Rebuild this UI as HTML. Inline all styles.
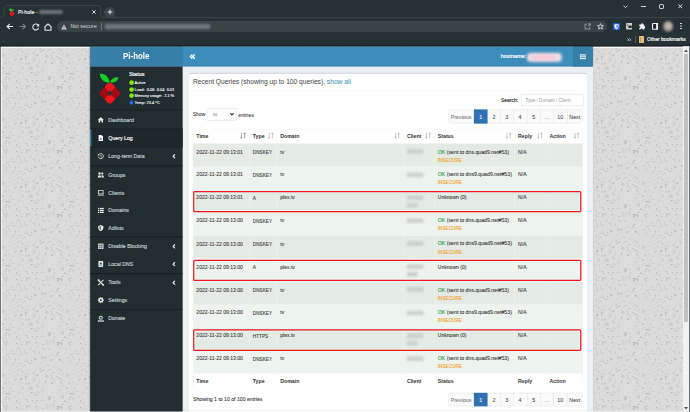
<!DOCTYPE html><html><head><meta charset="utf-8"><style>
html,body{margin:0;padding:0}
body{width:690px;height:412px;overflow:hidden;position:relative;background:#263136;font-family:"Liberation Sans",sans-serif}
.a{position:absolute}
.t{position:absolute;white-space:nowrap;line-height:1}
#page{position:absolute;left:0;top:46px;width:690px;height:366px;overflow:hidden;background:#dcdcdc}
#s{position:absolute;left:0;top:0;width:1715px;height:910px;transform:translateY(0.5px) scale(0.40233);transform-origin:0 0}
#w{position:absolute;left:223.7px;top:0;width:1250px;height:1000px;background:#ecf0f5;box-shadow:0 0 5px rgba(0,0,0,.5)}
</style></head><body>
<div class="a" style="left:0;top:0;width:690px;height:46px;background:#263136"></div>
<svg class="a" style="left:0;top:0" width="690" height="20" viewBox="0 0 690 20"><path d="M0 17.6H1.2Q4.2 17.6 4.2 14.6V8.6Q4.2 5.6 7.2 5.6H97.4Q100.4 5.6 100.4 8.6V14.6Q100.4 17.6 103.4 17.6H690" stroke="#3e494e" stroke-width="0.9" fill="none"/></svg>
<svg class="a" style="left:8px;top:8px" width="8" height="9" viewBox="0 0 8 9"><circle cx="2.5" cy="1.8" r="1.3" fill="#22d42a"/><path d="M2.6 2.6Q4 3.4 5.6 1.4" stroke="#22d42a" stroke-width="1.2" fill="none"/><circle cx="3.9" cy="5.6" r="2.3" fill="#f01820"/><circle cx="3.9" cy="5.6" r="0.7" fill="#6b1a1e"/></svg>
<div class="t" style="left:17.9px;top:9.5px;font-size:5.3px;color:#f1f3f4;font-weight:400;-webkit-text-stroke:0.15px #f1f3f4">Pi-hole -</div>
<div class="a" style="left:38.5px;top:9.8px;width:24px;height:4.6px;background:#6a7479;filter:blur(1.3px);border-radius:2px"></div>
<svg class="a" style="left:92px;top:9.5px" width="4" height="4" viewBox="0 0 4 4"><path d="M0.3 0.3L3.7 3.7M3.7 0.3L0.3 3.7" stroke="#e8eaed" stroke-width="0.9"/></svg>
<div class="a" style="left:104px;top:6.5px;width:11px;height:11px;border-radius:50%;background:#3a454a"></div>
<svg class="a" style="left:106.5px;top:9px" width="6" height="6" viewBox="0 0 6 6"><path d="M3 0.6V5.4M0.6 3H5.4" stroke="#e8eaed" stroke-width="1"/></svg>
<svg class="a" style="left:622.5px;top:4.6px" width="5" height="3.4" viewBox="0 0 5 3.4"><path d="M0.5 0.6L2.5 2.7L4.5 0.6" stroke="#d5d8db" stroke-width="0.95" fill="none"/></svg>
<div class="a" style="left:641.2px;top:6.2px;width:4.4px;height:0.9px;background:#d5d8db"></div>
<div class="a" style="left:659.2px;top:4.3px;width:3px;height:3px;border:0.9px solid #d5d8db;border-radius:1.2px"></div>
<svg class="a" style="left:678px;top:4.1px" width="4.6" height="4.6" viewBox="0 0 4.6 4.6"><path d="M0.4 0.4L4.2 4.2M4.2 0.4L0.4 4.2" stroke="#e8eaed" stroke-width="0.95"/></svg>
<svg class="a" style="left:5.5px;top:22.8px" width="7.5" height="7" viewBox="0 0 7.5 7"><path d="M7 3.5H1.2M3.8 0.8L1.1 3.5L3.8 6.2" stroke="#e8eaed" stroke-width="1.1" fill="none"/></svg>
<svg class="a" style="left:18.5px;top:22.8px" width="7.5" height="7" viewBox="0 0 7.5 7"><path d="M0.5 3.5H6.3M3.7 0.8L6.4 3.5L3.7 6.2" stroke="#7d878b" stroke-width="1.1" fill="none"/></svg>
<svg class="a" style="left:31.5px;top:22.8px" width="8" height="8" viewBox="0 0 8 8"><path d="M6.4 2.6A3 3 0 1 0 6.6 5" stroke="#e8eaed" stroke-width="1.1" fill="none"/><path d="M7.2 0.8V3.6H4.4Z" fill="#e8eaed"/></svg>
<svg class="a" style="left:44px;top:22.6px" width="8" height="8" viewBox="0 0 8 8"><path d="M1 3.6L4 1L7 3.6V7.2H1Z" stroke="#e8eaed" stroke-width="1.1" fill="none" stroke-linejoin="round"/></svg>
<div class="a" style="left:57px;top:20.8px;width:550px;height:11.4px;border-radius:6px;background:#394449"></div>
<svg class="a" style="left:61px;top:23.5px" width="6" height="6" viewBox="0 0 6 6"><path d="M3 0.3L5.8 5.6H0.2Z" fill="#c9ccd0"/><path d="M3 2.1V3.9M3 4.4V4.9" stroke="#394449" stroke-width="0.6"/></svg>
<div class="t" style="left:70.4px;top:24.1px;font-size:5.45px;color:#d5d8da;font-weight:400;">Not secure</div>
<div class="a" style="left:100.6px;top:23px;width:0.6px;height:7px;background:#6f777b"></div>
<div class="a" style="left:105px;top:24.3px;width:105px;height:4.4px;background:#6d777b;filter:blur(1.2px)"></div>
<svg class="a" style="left:584px;top:23px" width="7" height="7" viewBox="0 0 7 7"><path d="M3 1.2H1V6H5.8V4M3.6 3.4L6.2 0.8M4 0.8H6.2V3" stroke="#a6acaf" stroke-width="0.8" fill="none"/></svg>
<svg class="a" style="left:597px;top:22.6px" width="7" height="7" viewBox="0 0 7 7"><path d="M3.5 0.6L4.3 2.6L6.4 2.7L4.8 4L5.3 6.1L3.5 5L1.7 6.1L2.2 4L0.6 2.7L2.7 2.6Z" stroke="#dfe1e3" stroke-width="0.85" fill="none" stroke-linejoin="round"/></svg>
<svg class="a" style="left:613px;top:22.8px" width="7" height="7.6" viewBox="0 0 7 7.6"><rect width="7" height="7.6" rx="1.2" fill="#1f5fd0"/><path d="M1.4 1.2H5.6V3.6Q5.6 5.6 3.5 6.6Q1.4 5.6 1.4 3.6Z" fill="#fff"/><path d="M3.5 1.9V5.6Q4.6 5 4.7 3.6V1.9Z" fill="#1f5fd0"/></svg>
<svg class="a" style="left:625.8px;top:23.4px" width="6.6" height="6.4" viewBox="0 0 6.6 6.4"><rect width="6.6" height="6.4" rx="1" fill="#cfd0d0"/><rect x="2.4" y="2.6" width="3.4" height="2.4" fill="#2b2f31"/><rect x="0.8" y="1.6" width="1.4" height="1" fill="#2b2f31"/></svg>
<svg class="a" style="left:638.8px;top:23.2px" width="6.6" height="6.8" viewBox="0 0 6.6 6.8"><path d="M0.3 1.6H2.2Q2 0.2 3.2 0.2Q4.4 0.2 4.2 1.6H5.2V3.2Q6.5 3 6.5 4.2Q6.5 5.4 5.2 5.2V6.6H3.5Q3.7 5.4 2.6 5.4Q1.5 5.4 1.7 6.6H0.3V4.8Q1.4 5 1.4 4Q1.4 3 0.3 3.2Z" fill="#f1f3f4"/></svg>
<svg class="a" style="left:651.6px;top:23.3px" width="6.8" height="6.8" viewBox="0 0 6.8 6.8"><rect x="0.55" y="0.55" width="5.7" height="5.7" rx="0.6" stroke="#f1f3f4" stroke-width="1.1" fill="#1e2427"/><rect x="4.1" y="0.6" width="2.1" height="5.6" fill="#f1f3f4"/></svg>
<div class="a" style="left:662.5px;top:21.3px;width:10.5px;height:10.5px;border-radius:50%;background:radial-gradient(circle at 55% 45%,#d9d0c4 0,#a29a91 45%,#5f6264 100%);filter:blur(0.9px)"></div>
<div class="a" style="left:679.8px;top:22.5px;width:1.8px;height:1.8px;border-radius:50%;background:#e8eaed;box-shadow:0 2.5px 0 #e8eaed,0 5px 0 #e8eaed"></div>
<svg class="a" style="left:626.8px;top:37.6px" width="4.4" height="3.6" viewBox="0 0 4.4 3.6"><path d="M0.4 0.4L1.8 1.8L0.4 3.2M2.4 0.4L3.8 1.8L2.4 3.2" stroke="#e8eaed" stroke-width="0.8" fill="none"/></svg>
<div class="a" style="left:634.8px;top:35.8px;width:0.6px;height:7.2px;background:#4f5a5f"></div>
<svg class="a" style="left:638.8px;top:36px" width="5.6" height="7" viewBox="0 0 5.6 7"><rect width="5.6" height="7" rx="0.6" fill="#e6bd78"/><rect x="1.2" y="0.8" width="0.6" height="5.4" fill="#b58a4a"/></svg>
<div class="t" style="left:647.0px;top:37.1px;font-size:5.05px;color:#f4f5f6;font-weight:400;-webkit-text-stroke:0.18px #f4f5f6">Other bookmarks</div>
<div class="a" style="left:0;top:45px;width:690px;height:1px;background:#1b2226"></div>
<div id="page">
<svg class="a" style="left:0;top:0" width="690" height="366"><defs><pattern id="bg" width="64" height="64" patternUnits="userSpaceOnUse"><rect x="20.7" y="9.7" width="0.8" height="0.8" fill="#7a7a7a" opacity="0.37"/><rect x="52.6" y="6.0" width="1.2" height="1.2" fill="#7a7a7a" opacity="0.34"/><rect x="13.7" y="5.5" width="0.8" height="0.8" fill="#7a7a7a" opacity="0.28"/><rect x="5.8" y="27.2" width="0.8" height="0.8" fill="#7a7a7a" opacity="0.43"/><rect x="60.6" y="40.4" width="0.8" height="0.8" fill="#7a7a7a" opacity="0.34"/><rect x="36.9" y="25.4" width="0.8" height="0.8" fill="#7a7a7a" opacity="0.49"/><rect x="35.6" y="8.5" width="1.2" height="1.2" fill="#7a7a7a" opacity="0.28"/><rect x="7.5" y="19.7" width="0.8" height="0.8" fill="#7a7a7a" opacity="0.43"/><rect x="6.6" y="36.6" width="0.8" height="0.8" fill="#7a7a7a" opacity="0.19"/><rect x="35.1" y="4.0" width="0.8" height="0.8" fill="#7a7a7a" opacity="0.14"/><rect x="31.8" y="34.0" width="1.0" height="1.0" fill="#7a7a7a" opacity="0.42"/><rect x="37.5" y="29.0" width="0.8" height="0.8" fill="#7a7a7a" opacity="0.23"/><rect x="44.7" y="15.6" width="1.2" height="1.2" fill="#7a7a7a" opacity="0.34"/><rect x="31.7" y="22.0" width="1.2" height="1.2" fill="#7a7a7a" opacity="0.29"/><rect x="62.7" y="7.6" width="1.0" height="1.0" fill="#7a7a7a" opacity="0.28"/><rect x="9.7" y="31.3" width="1.2" height="1.2" fill="#7a7a7a" opacity="0.13"/><rect x="5.0" y="35.7" width="1.0" height="1.0" fill="#7a7a7a" opacity="0.42"/><rect x="21.8" y="22.4" width="1.0" height="1.0" fill="#7a7a7a" opacity="0.31"/><rect x="4.4" y="6.0" width="1.2" height="1.2" fill="#7a7a7a" opacity="0.22"/><rect x="42.5" y="3.9" width="1.2" height="1.2" fill="#7a7a7a" opacity="0.39"/><rect x="37.0" y="43.6" width="1.2" height="1.2" fill="#7a7a7a" opacity="0.29"/><rect x="24.7" y="42.8" width="1.0" height="1.0" fill="#7a7a7a" opacity="0.13"/><rect x="22.7" y="39.1" width="0.8" height="0.8" fill="#7a7a7a" opacity="0.31"/><rect x="49.2" y="8.3" width="1.0" height="1.0" fill="#7a7a7a" opacity="0.21"/><rect x="58.7" y="31.8" width="1.0" height="1.0" fill="#7a7a7a" opacity="0.18"/><rect x="35.2" y="56.5" width="1.2" height="1.2" fill="#7a7a7a" opacity="0.43"/><rect x="17.8" y="26.6" width="1.0" height="1.0" fill="#7a7a7a" opacity="0.26"/><rect x="61.3" y="9.7" width="0.8" height="0.8" fill="#7a7a7a" opacity="0.19"/><rect x="42.1" y="0.8" width="0.8" height="0.8" fill="#7a7a7a" opacity="0.44"/><rect x="16.8" y="0.3" width="1.0" height="1.0" fill="#7a7a7a" opacity="0.28"/><rect x="39.0" y="20.4" width="1.2" height="1.2" fill="#7a7a7a" opacity="0.17"/><rect x="60.8" y="41.9" width="1.0" height="1.0" fill="#7a7a7a" opacity="0.40"/><rect x="57.6" y="49.9" width="1.2" height="1.2" fill="#7a7a7a" opacity="0.45"/><rect x="25.1" y="25.5" width="1.2" height="1.2" fill="#7a7a7a" opacity="0.16"/><rect x="25.6" y="12.2" width="1.0" height="1.0" fill="#7a7a7a" opacity="0.49"/><rect x="10.4" y="21.8" width="0.8" height="0.8" fill="#7a7a7a" opacity="0.14"/><rect x="36.3" y="34.3" width="1.2" height="1.2" fill="#7a7a7a" opacity="0.48"/><rect x="1.6" y="56.0" width="0.8" height="0.8" fill="#7a7a7a" opacity="0.35"/><rect x="40.6" y="61.1" width="1.0" height="1.0" fill="#7a7a7a" opacity="0.35"/><rect x="7.9" y="54.3" width="1.0" height="1.0" fill="#7a7a7a" opacity="0.50"/><rect x="30.7" y="20.0" width="1.2" height="1.2" fill="#7a7a7a" opacity="0.17"/><rect x="21.9" y="16.9" width="0.8" height="0.8" fill="#7a7a7a" opacity="0.43"/><rect x="33.0" y="13.1" width="1.0" height="1.0" fill="#7a7a7a" opacity="0.48"/><rect x="9.4" y="34.8" width="1.2" height="1.2" fill="#7a7a7a" opacity="0.13"/><rect x="19.1" y="41.1" width="1.0" height="1.0" fill="#7a7a7a" opacity="0.15"/><rect x="33.2" y="58.1" width="0.8" height="0.8" fill="#7a7a7a" opacity="0.26"/><rect x="34.1" y="49.9" width="0.8" height="0.8" fill="#7a7a7a" opacity="0.25"/><rect x="39.2" y="50.5" width="0.8" height="0.8" fill="#7a7a7a" opacity="0.41"/><rect x="51.6" y="52.4" width="0.8" height="0.8" fill="#7a7a7a" opacity="0.40"/><rect x="12.8" y="31.5" width="0.8" height="0.8" fill="#7a7a7a" opacity="0.40"/><rect x="50.6" y="30.2" width="1.2" height="1.2" fill="#7a7a7a" opacity="0.19"/><rect x="61.2" y="28.6" width="1.0" height="1.0" fill="#7a7a7a" opacity="0.48"/><rect x="61.1" y="23.3" width="0.8" height="0.8" fill="#7a7a7a" opacity="0.20"/><rect x="30.1" y="21.6" width="1.2" height="1.2" fill="#7a7a7a" opacity="0.30"/><rect x="53.8" y="30.7" width="1.2" height="1.2" fill="#7a7a7a" opacity="0.37"/><rect x="5.4" y="42.3" width="1.2" height="1.2" fill="#7a7a7a" opacity="0.47"/><rect x="48.0" y="30.6" width="1.2" height="1.2" fill="#7a7a7a" opacity="0.19"/><rect x="21.3" y="51.3" width="1.0" height="1.0" fill="#7a7a7a" opacity="0.49"/><rect x="29.6" y="47.6" width="0.8" height="0.8" fill="#7a7a7a" opacity="0.15"/><rect x="10.9" y="8.1" width="1.0" height="1.0" fill="#7a7a7a" opacity="0.18"/><rect x="51.6" y="9.4" width="1.0" height="1.0" fill="#7a7a7a" opacity="0.43"/><rect x="42.1" y="22.4" width="0.8" height="0.8" fill="#7a7a7a" opacity="0.33"/><rect x="1.4" y="51.2" width="0.8" height="0.8" fill="#7a7a7a" opacity="0.40"/><rect x="33.7" y="59.8" width="0.8" height="0.8" fill="#7a7a7a" opacity="0.28"/><rect x="52.9" y="13.5" width="1.0" height="1.0" fill="#7a7a7a" opacity="0.22"/><rect x="32.1" y="48.9" width="1.2" height="1.2" fill="#7a7a7a" opacity="0.24"/><rect x="26.8" y="8.4" width="1.0" height="1.0" fill="#7a7a7a" opacity="0.47"/><rect x="57.5" y="42.4" width="1.2" height="1.2" fill="#7a7a7a" opacity="0.43"/><rect x="26.9" y="58.7" width="1.2" height="1.2" fill="#7a7a7a" opacity="0.31"/><rect x="9.7" y="32.7" width="0.8" height="0.8" fill="#7a7a7a" opacity="0.45"/><rect x="38.9" y="49.7" width="0.8" height="0.8" fill="#7a7a7a" opacity="0.18"/><rect x="30.3" y="46.4" width="1.0" height="1.0" fill="#7a7a7a" opacity="0.33"/><rect x="43.7" y="34.0" width="0.8" height="0.8" fill="#7a7a7a" opacity="0.30"/><rect x="56.5" y="3.6" width="0.8" height="0.8" fill="#7a7a7a" opacity="0.19"/><rect x="49.4" y="32.5" width="0.8" height="0.8" fill="#7a7a7a" opacity="0.33"/><rect x="28.4" y="39.2" width="1.2" height="1.2" fill="#7a7a7a" opacity="0.31"/><rect x="12.8" y="17.7" width="1.0" height="1.0" fill="#7a7a7a" opacity="0.31"/><rect x="32.5" y="15.8" width="1.0" height="1.0" fill="#7a7a7a" opacity="0.32"/><rect x="59.1" y="57.1" width="1.0" height="1.0" fill="#7a7a7a" opacity="0.20"/><rect x="8.8" y="7.8" width="0.8" height="0.8" fill="#7a7a7a" opacity="0.29"/><rect x="43.0" y="27.4" width="1.0" height="1.0" fill="#7a7a7a" opacity="0.20"/><rect x="50.2" y="57.4" width="1.2" height="1.2" fill="#7a7a7a" opacity="0.18"/><rect x="41.2" y="23.4" width="0.8" height="0.8" fill="#7a7a7a" opacity="0.22"/><rect x="61.9" y="14.1" width="1.0" height="1.0" fill="#7a7a7a" opacity="0.48"/><rect x="56.6" y="10.4" width="0.8" height="0.8" fill="#7a7a7a" opacity="0.37"/><rect x="10.3" y="27.6" width="1.0" height="1.0" fill="#7a7a7a" opacity="0.32"/><rect x="27.0" y="22.8" width="1.0" height="1.0" fill="#7a7a7a" opacity="0.16"/><rect x="1.2" y="35.5" width="0.8" height="0.8" fill="#7a7a7a" opacity="0.29"/><rect x="24.6" y="33.1" width="0.8" height="0.8" fill="#7a7a7a" opacity="0.23"/><rect x="7.2" y="58.8" width="0.8" height="0.8" fill="#7a7a7a" opacity="0.21"/><rect x="5.4" y="17.4" width="0.8" height="0.8" fill="#7a7a7a" opacity="0.46"/><rect x="17.3" y="8.3" width="1.2" height="1.2" fill="#7a7a7a" opacity="0.28"/><rect x="52.4" y="16.6" width="1.2" height="1.2" fill="#7a7a7a" opacity="0.18"/><rect x="36.5" y="44.8" width="0.8" height="0.8" fill="#7a7a7a" opacity="0.15"/><rect x="51.2" y="11.7" width="1.0" height="1.0" fill="#7a7a7a" opacity="0.46"/><rect x="60.1" y="40.6" width="0.8" height="0.8" fill="#7a7a7a" opacity="0.42"/><rect x="38.9" y="14.2" width="0.8" height="0.8" fill="#7a7a7a" opacity="0.22"/><rect x="29.0" y="21.7" width="1.0" height="1.0" fill="#7a7a7a" opacity="0.33"/><rect x="39.8" y="2.8" width="0.8" height="0.8" fill="#7a7a7a" opacity="0.39"/><rect x="62.0" y="16.8" width="1.0" height="1.0" fill="#7a7a7a" opacity="0.19"/><rect x="40.2" y="34.0" width="1.0" height="1.0" fill="#7a7a7a" opacity="0.20"/><rect x="32.0" y="11.4" width="0.8" height="0.8" fill="#7a7a7a" opacity="0.25"/><rect x="63.6" y="2.4" width="1.2" height="1.2" fill="#7a7a7a" opacity="0.13"/><rect x="35.3" y="12.1" width="1.0" height="1.0" fill="#7a7a7a" opacity="0.30"/><rect x="6.8" y="52.4" width="1.0" height="1.0" fill="#7a7a7a" opacity="0.28"/><rect x="34.9" y="56.9" width="1.0" height="1.0" fill="#7a7a7a" opacity="0.49"/><rect x="44.0" y="62.9" width="1.2" height="1.2" fill="#7a7a7a" opacity="0.25"/><rect x="46.6" y="8.9" width="0.8" height="0.8" fill="#7a7a7a" opacity="0.50"/><rect x="53.6" y="0.9" width="1.0" height="1.0" fill="#7a7a7a" opacity="0.36"/><rect x="27.6" y="3.5" width="1.0" height="1.0" fill="#7a7a7a" opacity="0.37"/><rect x="55.7" y="42.9" width="0.8" height="0.8" fill="#7a7a7a" opacity="0.23"/><rect x="44.3" y="2.9" width="1.0" height="1.0" fill="#7a7a7a" opacity="0.19"/><rect x="28.5" y="16.8" width="1.2" height="1.2" fill="#7a7a7a" opacity="0.49"/><rect x="20.7" y="2.2" width="0.8" height="0.8" fill="#7a7a7a" opacity="0.46"/><rect x="22.8" y="0.1" width="1.0" height="1.0" fill="#7a7a7a" opacity="0.27"/><rect x="17.9" y="42.0" width="0.8" height="0.8" fill="#7a7a7a" opacity="0.21"/><rect x="5.8" y="52.3" width="1.2" height="1.2" fill="#7a7a7a" opacity="0.17"/><rect x="2.7" y="1.4" width="0.8" height="0.8" fill="#7a7a7a" opacity="0.24"/><rect x="5.4" y="61.3" width="0.8" height="0.8" fill="#7a7a7a" opacity="0.44"/><rect x="42.1" y="45.8" width="1.0" height="1.0" fill="#7a7a7a" opacity="0.45"/><rect x="48.9" y="46.1" width="1.0" height="1.0" fill="#7a7a7a" opacity="0.31"/><rect x="46.3" y="41.2" width="1.2" height="1.2" fill="#7a7a7a" opacity="0.14"/><rect x="57.1" y="40.1" width="1.2" height="1.2" fill="#7a7a7a" opacity="0.40"/><rect x="8.9" y="33.5" width="0.8" height="0.8" fill="#7a7a7a" opacity="0.31"/><rect x="52.9" y="37.4" width="1.2" height="1.2" fill="#7a7a7a" opacity="0.46"/><rect x="61.2" y="41.1" width="0.8" height="0.8" fill="#7a7a7a" opacity="0.15"/><rect x="8.5" y="23.1" width="1.0" height="1.0" fill="#7a7a7a" opacity="0.16"/><rect x="35.7" y="40.2" width="1.2" height="1.2" fill="#7a7a7a" opacity="0.36"/><rect x="15.7" y="16.9" width="0.8" height="0.8" fill="#7a7a7a" opacity="0.29"/><rect x="47.9" y="32.2" width="1.2" height="1.2" fill="#7a7a7a" opacity="0.32"/><rect x="33.7" y="47.7" width="0.8" height="0.8" fill="#7a7a7a" opacity="0.30"/><rect x="54.2" y="15.0" width="0.8" height="0.8" fill="#7a7a7a" opacity="0.41"/><rect x="47.3" y="62.4" width="1.0" height="1.0" fill="#7a7a7a" opacity="0.31"/><rect x="4.9" y="58.3" width="0.8" height="0.8" fill="#7a7a7a" opacity="0.23"/><rect x="39.5" y="41.1" width="0.8" height="0.8" fill="#7a7a7a" opacity="0.15"/><rect x="21.2" y="41.7" width="1.2" height="1.2" fill="#7a7a7a" opacity="0.38"/><rect x="36.3" y="0.8" width="1.0" height="1.0" fill="#7a7a7a" opacity="0.14"/><rect x="62.2" y="6.4" width="1.0" height="1.0" fill="#7a7a7a" opacity="0.20"/><rect x="18.6" y="33.1" width="1.0" height="1.0" fill="#7a7a7a" opacity="0.30"/><rect x="49.1" y="63.6" width="1.0" height="1.0" fill="#7a7a7a" opacity="0.33"/><rect x="62.6" y="59.9" width="1.0" height="1.0" fill="#7a7a7a" opacity="0.13"/><rect x="4.9" y="32.4" width="1.0" height="1.0" fill="#7a7a7a" opacity="0.50"/><rect x="24.8" y="58.7" width="0.8" height="0.8" fill="#7a7a7a" opacity="0.47"/><rect x="37.2" y="9.1" width="1.0" height="1.0" fill="#7a7a7a" opacity="0.32"/><rect x="8.5" y="52.5" width="0.8" height="0.8" fill="#7a7a7a" opacity="0.31"/><rect x="45.0" y="14.8" width="1.0" height="1.0" fill="#7a7a7a" opacity="0.46"/><rect x="25.2" y="10.2" width="1.2" height="1.2" fill="#7a7a7a" opacity="0.48"/><rect x="28.8" y="19.3" width="1.0" height="1.0" fill="#7a7a7a" opacity="0.17"/><rect x="24.1" y="7.7" width="1.0" height="1.0" fill="#7a7a7a" opacity="0.25"/><rect x="48.0" y="53.7" width="0.8" height="0.8" fill="#7a7a7a" opacity="0.17"/><rect x="45.6" y="57.7" width="1.0" height="1.0" fill="#7a7a7a" opacity="0.23"/><rect x="4.2" y="25.0" width="0.8" height="0.8" fill="#7a7a7a" opacity="0.45"/><rect x="23.1" y="27.4" width="0.8" height="0.8" fill="#7a7a7a" opacity="0.22"/><rect x="18.0" y="3.3" width="1.2" height="1.2" fill="#7a7a7a" opacity="0.37"/><rect x="59.9" y="16.0" width="1.2" height="1.2" fill="#7a7a7a" opacity="0.22"/><rect x="20.2" y="49.5" width="1.0" height="1.0" fill="#7a7a7a" opacity="0.42"/><rect x="56.6" y="52.0" width="1.2" height="1.2" fill="#7a7a7a" opacity="0.36"/><rect x="35.2" y="46.1" width="1.2" height="1.2" fill="#7a7a7a" opacity="0.14"/><rect x="26.3" y="39.4" width="1.0" height="1.0" fill="#7a7a7a" opacity="0.17"/><rect x="31.1" y="58.4" width="0.8" height="0.8" fill="#7a7a7a" opacity="0.33"/><rect x="30.2" y="22.0" width="1.2" height="1.2" fill="#7a7a7a" opacity="0.23"/><rect x="47.3" y="41.8" width="0.8" height="0.8" fill="#7a7a7a" opacity="0.27"/><rect x="19.3" y="35.7" width="0.8" height="0.8" fill="#7a7a7a" opacity="0.27"/><rect x="41.2" y="4.8" width="1.0" height="1.0" fill="#7a7a7a" opacity="0.31"/><rect x="35.2" y="29.0" width="1.0" height="1.0" fill="#7a7a7a" opacity="0.25"/><rect x="27.4" y="35.1" width="0.8" height="0.8" fill="#7a7a7a" opacity="0.21"/><rect x="21.9" y="5.8" width="1.0" height="1.0" fill="#7a7a7a" opacity="0.21"/><rect x="51.8" y="12.9" width="1.0" height="1.0" fill="#7a7a7a" opacity="0.13"/><rect x="24.5" y="47.7" width="1.0" height="1.0" fill="#7a7a7a" opacity="0.20"/><rect x="21.6" y="4.0" width="1.0" height="1.0" fill="#7a7a7a" opacity="0.23"/><rect x="8.1" y="32.2" width="0.8" height="0.8" fill="#7a7a7a" opacity="0.36"/><rect x="5.9" y="57.4" width="1.2" height="1.2" fill="#7a7a7a" opacity="0.27"/><rect x="28.5" y="61.1" width="0.8" height="0.8" fill="#7a7a7a" opacity="0.44"/><rect x="8.1" y="27.2" width="1.0" height="1.0" fill="#7a7a7a" opacity="0.41"/><rect x="62.0" y="31.3" width="1.2" height="1.2" fill="#7a7a7a" opacity="0.15"/><rect x="54.7" y="62.2" width="0.8" height="0.8" fill="#7a7a7a" opacity="0.21"/><rect x="14.3" y="9.7" width="0.8" height="0.8" fill="#7a7a7a" opacity="0.49"/><rect x="60.3" y="46.2" width="1.0" height="1.0" fill="#7a7a7a" opacity="0.37"/><rect x="5.4" y="49.7" width="0.8" height="0.8" fill="#7a7a7a" opacity="0.12"/><rect x="14.9" y="58.9" width="1.0" height="1.0" fill="#7a7a7a" opacity="0.37"/><rect x="61.6" y="40.1" width="1.0" height="1.0" fill="#7a7a7a" opacity="0.32"/><rect x="44.7" y="7.2" width="1.2" height="1.2" fill="#7a7a7a" opacity="0.15"/><rect x="60.4" y="12.3" width="1.2" height="1.2" fill="#7a7a7a" opacity="0.22"/><rect x="0.1" y="34.4" width="1.0" height="1.0" fill="#7a7a7a" opacity="0.50"/><rect x="61.4" y="41.3" width="1.0" height="1.0" fill="#7a7a7a" opacity="0.46"/><rect x="33.7" y="35.0" width="1.0" height="1.0" fill="#7a7a7a" opacity="0.13"/><rect x="45.1" y="19.7" width="1.0" height="1.0" fill="#7a7a7a" opacity="0.13"/><rect x="56.6" y="41.4" width="0.8" height="0.8" fill="#7a7a7a" opacity="0.15"/><rect x="42.7" y="59.2" width="0.8" height="0.8" fill="#7a7a7a" opacity="0.21"/><rect x="44.5" y="46.0" width="1.0" height="1.0" fill="#7a7a7a" opacity="0.26"/><rect x="12.7" y="51.0" width="1.2" height="1.2" fill="#7a7a7a" opacity="0.40"/><rect x="4.3" y="31.7" width="0.8" height="0.8" fill="#7a7a7a" opacity="0.20"/><rect x="14.8" y="14.2" width="1.0" height="1.0" fill="#7a7a7a" opacity="0.41"/><rect x="7.0" y="39.9" width="0.8" height="0.8" fill="#7a7a7a" opacity="0.35"/><rect x="31.0" y="58.3" width="1.2" height="1.2" fill="#7a7a7a" opacity="0.14"/><rect x="9.4" y="25.2" width="1.2" height="1.2" fill="#7a7a7a" opacity="0.20"/><rect x="9.1" y="3.3" width="1.0" height="1.0" fill="#7a7a7a" opacity="0.14"/><rect x="28.8" y="45.6" width="0.8" height="0.8" fill="#7a7a7a" opacity="0.24"/><rect x="63.8" y="59.6" width="0.8" height="0.8" fill="#7a7a7a" opacity="0.25"/><rect x="41.8" y="33.6" width="1.0" height="1.0" fill="#7a7a7a" opacity="0.30"/><rect x="42.5" y="24.2" width="1.0" height="1.0" fill="#7a7a7a" opacity="0.26"/><rect x="28.3" y="7.0" width="0.8" height="0.8" fill="#7a7a7a" opacity="0.15"/><rect x="22.5" y="61.2" width="0.8" height="0.8" fill="#7a7a7a" opacity="0.17"/><rect x="24.3" y="49.2" width="1.0" height="1.0" fill="#7a7a7a" opacity="0.24"/><rect x="5.6" y="45.1" width="1.2" height="1.2" fill="#7a7a7a" opacity="0.19"/><rect x="58.8" y="12.4" width="1.0" height="1.0" fill="#7a7a7a" opacity="0.26"/><rect x="1.9" y="26.3" width="1.0" height="1.0" fill="#7a7a7a" opacity="0.43"/><rect x="2.6" y="2.2" width="0.8" height="0.8" fill="#7a7a7a" opacity="0.14"/><rect x="16.4" y="47.8" width="1.0" height="1.0" fill="#7a7a7a" opacity="0.46"/><rect x="23.2" y="21.4" width="0.8" height="0.8" fill="#7a7a7a" opacity="0.48"/><rect x="16.8" y="45.9" width="1.0" height="1.0" fill="#7a7a7a" opacity="0.24"/><rect x="19.0" y="46.2" width="1.2" height="1.2" fill="#7a7a7a" opacity="0.35"/><rect x="60.6" y="4.2" width="0.8" height="0.8" fill="#7a7a7a" opacity="0.43"/><rect x="30.4" y="61.2" width="1.0" height="1.0" fill="#7a7a7a" opacity="0.48"/><rect x="50.5" y="58.5" width="0.8" height="0.8" fill="#7a7a7a" opacity="0.43"/><rect x="59.4" y="11.7" width="1.2" height="1.2" fill="#7a7a7a" opacity="0.42"/><rect x="19.4" y="44.3" width="0.8" height="0.8" fill="#7a7a7a" opacity="0.18"/><rect x="21.0" y="20.5" width="1.2" height="1.2" fill="#7a7a7a" opacity="0.26"/><rect x="5.1" y="12.6" width="0.8" height="0.8" fill="#7a7a7a" opacity="0.41"/><rect x="26.1" y="41.6" width="1.2" height="1.2" fill="#7a7a7a" opacity="0.30"/><rect x="20.8" y="62.7" width="0.8" height="0.8" fill="#7a7a7a" opacity="0.46"/><rect x="17.0" y="5.4" width="1.0" height="1.0" fill="#7a7a7a" opacity="0.16"/><rect x="63.3" y="62.2" width="0.8" height="0.8" fill="#7a7a7a" opacity="0.19"/><rect x="26.7" y="39.7" width="1.2" height="1.2" fill="#7a7a7a" opacity="0.38"/><rect x="34.5" y="49.5" width="1.0" height="1.0" fill="#7a7a7a" opacity="0.41"/><rect x="18.8" y="36.3" width="1.2" height="1.2" fill="#7a7a7a" opacity="0.26"/><rect x="16.7" y="28.1" width="0.8" height="0.8" fill="#7a7a7a" opacity="0.19"/><rect x="9.8" y="56.6" width="1.0" height="1.0" fill="#7a7a7a" opacity="0.34"/><rect x="4.1" y="16.1" width="1.2" height="1.2" fill="#7a7a7a" opacity="0.21"/><rect x="14.8" y="51.7" width="0.8" height="0.8" fill="#7a7a7a" opacity="0.37"/><rect x="6.5" y="30.4" width="1.0" height="1.0" fill="#7a7a7a" opacity="0.43"/><rect x="58.5" y="2.6" width="0.8" height="0.8" fill="#7a7a7a" opacity="0.23"/><rect x="3.2" y="38.4" width="0.8" height="0.8" fill="#7a7a7a" opacity="0.43"/><rect x="59.5" y="23.8" width="1.0" height="1.0" fill="#7a7a7a" opacity="0.45"/><rect x="38.6" y="49.6" width="0.8" height="0.8" fill="#7a7a7a" opacity="0.37"/><rect x="6.8" y="38.2" width="0.8" height="0.8" fill="#7a7a7a" opacity="0.36"/><rect x="2.4" y="21.8" width="1.0" height="1.0" fill="#7a7a7a" opacity="0.14"/><rect x="2.4" y="46.9" width="0.8" height="0.8" fill="#7a7a7a" opacity="0.47"/><rect x="52.4" y="26.2" width="1.2" height="1.2" fill="#7a7a7a" opacity="0.26"/><rect x="20.0" y="13.0" width="1.2" height="1.2" fill="#7a7a7a" opacity="0.42"/><rect x="30.9" y="26.1" width="1.2" height="1.2" fill="#7a7a7a" opacity="0.42"/><rect x="35.2" y="40.9" width="0.8" height="0.8" fill="#7a7a7a" opacity="0.15"/><rect x="25.5" y="17.4" width="1.2" height="1.2" fill="#7a7a7a" opacity="0.50"/><rect x="19.7" y="61.0" width="1.2" height="1.2" fill="#7a7a7a" opacity="0.24"/><rect x="56.6" y="26.5" width="1.0" height="1.0" fill="#7a7a7a" opacity="0.13"/><rect x="41.2" y="25.0" width="0.8" height="0.8" fill="#7a7a7a" opacity="0.27"/><rect x="27.8" y="10.0" width="0.8" height="0.8" fill="#7a7a7a" opacity="0.16"/><rect x="26.0" y="56.5" width="0.8" height="0.8" fill="#7a7a7a" opacity="0.30"/><rect x="8.3" y="3.3" width="1.0" height="1.0" fill="#7a7a7a" opacity="0.17"/><rect x="5.7" y="39.8" width="1.2" height="1.2" fill="#7a7a7a" opacity="0.26"/><rect x="11.0" y="22.3" width="0.8" height="0.8" fill="#7a7a7a" opacity="0.18"/><rect x="59.2" y="7.0" width="0.8" height="0.8" fill="#7a7a7a" opacity="0.31"/><rect x="19.3" y="53.6" width="1.0" height="1.0" fill="#7a7a7a" opacity="0.14"/><rect x="20.1" y="38.9" width="0.8" height="0.8" fill="#7a7a7a" opacity="0.36"/><rect x="57.9" y="39.7" width="0.8" height="0.8" fill="#7a7a7a" opacity="0.43"/><rect x="41.0" y="54.8" width="1.2" height="1.2" fill="#7a7a7a" opacity="0.36"/><rect x="54.2" y="53.1" width="0.8" height="0.8" fill="#7a7a7a" opacity="0.19"/><rect x="2.7" y="60.1" width="1.0" height="1.0" fill="#7a7a7a" opacity="0.18"/><rect x="7.9" y="15.8" width="0.8" height="0.8" fill="#7a7a7a" opacity="0.40"/><rect x="2.6" y="36.0" width="0.8" height="0.8" fill="#7a7a7a" opacity="0.41"/><rect x="42.7" y="20.7" width="1.0" height="1.0" fill="#7a7a7a" opacity="0.27"/><rect x="35.2" y="40.1" width="1.0" height="1.0" fill="#7a7a7a" opacity="0.24"/><rect x="19.7" y="16.0" width="1.0" height="1.0" fill="#7a7a7a" opacity="0.27"/><rect x="28.6" y="28.1" width="1.2" height="1.2" fill="#7a7a7a" opacity="0.13"/><rect x="63.1" y="29.8" width="1.2" height="1.2" fill="#7a7a7a" opacity="0.29"/><rect x="49.9" y="29.3" width="1.0" height="1.0" fill="#7a7a7a" opacity="0.19"/><rect x="25.6" y="4.3" width="1.0" height="1.0" fill="#7a7a7a" opacity="0.26"/><rect x="5.9" y="28.3" width="0.8" height="0.8" fill="#7a7a7a" opacity="0.31"/><rect x="2.6" y="8.3" width="1.0" height="1.0" fill="#7a7a7a" opacity="0.47"/><rect x="49.8" y="32.7" width="1.2" height="1.2" fill="#7a7a7a" opacity="0.14"/><rect x="57.3" y="41.8" width="0.8" height="0.8" fill="#7a7a7a" opacity="0.42"/><rect x="54.9" y="63.8" width="0.8" height="0.8" fill="#7a7a7a" opacity="0.40"/><rect x="12.4" y="62.8" width="0.8" height="0.8" fill="#7a7a7a" opacity="0.31"/><rect x="43.9" y="46.1" width="1.0" height="1.0" fill="#7a7a7a" opacity="0.20"/><rect x="39.1" y="16.1" width="1.2" height="1.2" fill="#7a7a7a" opacity="0.24"/><rect x="17.6" y="52.2" width="1.2" height="1.2" fill="#7a7a7a" opacity="0.17"/><rect x="61.7" y="30.7" width="1.2" height="1.2" fill="#7a7a7a" opacity="0.34"/><rect x="32.4" y="20.4" width="0.8" height="0.8" fill="#7a7a7a" opacity="0.13"/><rect x="25.8" y="40.7" width="1.0" height="1.0" fill="#7a7a7a" opacity="0.23"/><rect x="57.3" y="10.8" width="0.8" height="0.8" fill="#7a7a7a" opacity="0.42"/><rect x="49.2" y="3.1" width="1.0" height="1.0" fill="#7a7a7a" opacity="0.45"/><rect x="35.5" y="37.1" width="0.8" height="0.8" fill="#7a7a7a" opacity="0.46"/><rect x="16.1" y="34.3" width="1.2" height="1.2" fill="#7a7a7a" opacity="0.45"/><rect x="51.1" y="16.9" width="1.2" height="1.2" fill="#7a7a7a" opacity="0.50"/><rect x="9.4" y="21.2" width="0.8" height="0.8" fill="#7a7a7a" opacity="0.15"/><rect x="11.3" y="47.6" width="1.2" height="1.2" fill="#7a7a7a" opacity="0.14"/><rect x="16.2" y="40.9" width="1.2" height="1.2" fill="#7a7a7a" opacity="0.49"/><rect x="59.4" y="57.3" width="1.2" height="1.2" fill="#7a7a7a" opacity="0.40"/><rect x="2.2" y="9.6" width="1.0" height="1.0" fill="#7a7a7a" opacity="0.35"/><rect x="26.7" y="23.3" width="1.0" height="1.0" fill="#7a7a7a" opacity="0.14"/><rect x="14.5" y="41.8" width="0.8" height="0.8" fill="#7a7a7a" opacity="0.13"/><rect x="36.3" y="19.4" width="1.2" height="1.2" fill="#7a7a7a" opacity="0.32"/><rect x="14.4" y="37.3" width="0.8" height="0.8" fill="#7a7a7a" opacity="0.34"/><rect x="23.4" y="53.0" width="0.8" height="0.8" fill="#7a7a7a" opacity="0.18"/><rect x="59.9" y="15.6" width="0.8" height="0.8" fill="#7a7a7a" opacity="0.18"/><rect x="4.1" y="9.3" width="1.0" height="1.0" fill="#7a7a7a" opacity="0.37"/><rect x="25.7" y="16.9" width="1.2" height="1.2" fill="#7a7a7a" opacity="0.12"/><rect x="52.5" y="57.1" width="1.2" height="1.2" fill="#7a7a7a" opacity="0.35"/><rect x="28.4" y="60.0" width="0.8" height="0.8" fill="#7a7a7a" opacity="0.40"/><rect x="10.6" y="0.0" width="0.8" height="0.8" fill="#7a7a7a" opacity="0.14"/><rect x="26.0" y="15.2" width="0.8" height="0.8" fill="#7a7a7a" opacity="0.14"/><rect x="0.8" y="35.3" width="0.8" height="0.8" fill="#7a7a7a" opacity="0.48"/><rect x="26.4" y="33.2" width="1.2" height="1.2" fill="#7a7a7a" opacity="0.36"/><rect x="41.1" y="52.1" width="1.0" height="1.0" fill="#7a7a7a" opacity="0.19"/><rect x="4.1" y="40.1" width="1.2" height="1.2" fill="#7a7a7a" opacity="0.50"/><rect x="50.1" y="45.8" width="1.0" height="1.0" fill="#7a7a7a" opacity="0.12"/><rect x="47.7" y="29.8" width="1.0" height="1.0" fill="#7a7a7a" opacity="0.40"/><rect x="11.2" y="63.8" width="1.2" height="1.2" fill="#7a7a7a" opacity="0.22"/><rect x="2.5" y="21.5" width="1.2" height="1.2" fill="#7a7a7a" opacity="0.40"/><rect x="60.3" y="16.9" width="1.2" height="1.2" fill="#7a7a7a" opacity="0.14"/><rect x="35.4" y="27.9" width="1.2" height="1.2" fill="#7a7a7a" opacity="0.42"/><rect x="62.2" y="18.9" width="0.8" height="0.8" fill="#7a7a7a" opacity="0.47"/><rect x="5.5" y="32.5" width="0.8" height="0.8" fill="#7a7a7a" opacity="0.18"/><rect x="53.9" y="13.0" width="1.0" height="1.0" fill="#7a7a7a" opacity="0.18"/><rect x="12.3" y="24.9" width="1.0" height="1.0" fill="#7a7a7a" opacity="0.35"/><rect x="58.1" y="40.4" width="1.2" height="1.2" fill="#7a7a7a" opacity="0.38"/><rect x="53.9" y="34.3" width="1.2" height="1.2" fill="#7a7a7a" opacity="0.30"/><rect x="44.6" y="54.9" width="1.2" height="1.2" fill="#7a7a7a" opacity="0.29"/><rect x="15.0" y="56.6" width="1.0" height="1.0" fill="#7a7a7a" opacity="0.42"/><rect x="39.8" y="5.0" width="0.8" height="0.8" fill="#7a7a7a" opacity="0.47"/><rect x="2.1" y="7.2" width="0.8" height="0.8" fill="#7a7a7a" opacity="0.36"/><rect x="22.1" y="9.1" width="0.8" height="0.8" fill="#7a7a7a" opacity="0.13"/><rect x="8.9" y="41.2" width="0.8" height="0.8" fill="#7a7a7a" opacity="0.14"/><rect x="47.2" y="4.2" width="1.0" height="1.0" fill="#7a7a7a" opacity="0.34"/><rect x="12.8" y="61.1" width="1.2" height="1.2" fill="#7a7a7a" opacity="0.32"/><rect x="4.2" y="55.5" width="1.0" height="1.0" fill="#7a7a7a" opacity="0.47"/><rect x="6.9" y="13.2" width="0.8" height="0.8" fill="#7a7a7a" opacity="0.16"/><rect x="60.8" y="58.3" width="0.8" height="0.8" fill="#7a7a7a" opacity="0.41"/><rect x="52.8" y="40.4" width="0.8" height="0.8" fill="#7a7a7a" opacity="0.23"/><rect x="8.5" y="50.7" width="1.0" height="1.0" fill="#7a7a7a" opacity="0.37"/><rect x="20.4" y="27.1" width="1.0" height="1.0" fill="#7a7a7a" opacity="0.13"/><rect x="59.5" y="3.1" width="1.0" height="1.0" fill="#7a7a7a" opacity="0.41"/><rect x="49.2" y="38.5" width="1.0" height="1.0" fill="#7a7a7a" opacity="0.30"/><rect x="39.6" y="2.0" width="1.0" height="1.0" fill="#7a7a7a" opacity="0.28"/><rect x="33.2" y="6.3" width="0.8" height="0.8" fill="#7a7a7a" opacity="0.30"/><rect x="34.4" y="13.9" width="0.8" height="0.8" fill="#7a7a7a" opacity="0.45"/><rect x="36.8" y="18.4" width="1.2" height="1.2" fill="#7a7a7a" opacity="0.29"/><rect x="12.9" y="48.8" width="0.8" height="0.8" fill="#7a7a7a" opacity="0.49"/><rect x="22.3" y="6.1" width="0.8" height="0.8" fill="#7a7a7a" opacity="0.38"/><rect x="61.9" y="37.9" width="1.2" height="1.2" fill="#7a7a7a" opacity="0.48"/><rect x="16.7" y="60.4" width="0.8" height="0.8" fill="#7a7a7a" opacity="0.23"/><rect x="60.1" y="14.8" width="1.2" height="1.2" fill="#7a7a7a" opacity="0.18"/><rect x="49.1" y="31.4" width="1.2" height="1.2" fill="#7a7a7a" opacity="0.50"/><rect x="50.4" y="40.2" width="1.0" height="1.0" fill="#7a7a7a" opacity="0.26"/><rect x="59.4" y="57.1" width="1.0" height="1.0" fill="#7a7a7a" opacity="0.40"/><rect x="56.9" y="1.6" width="1.0" height="1.0" fill="#7a7a7a" opacity="0.20"/><rect x="27.4" y="34.9" width="1.2" height="1.2" fill="#7a7a7a" opacity="0.19"/><rect x="14.9" y="29.5" width="1.2" height="1.2" fill="#7a7a7a" opacity="0.32"/><rect x="48.2" y="41.4" width="1.0" height="1.0" fill="#7a7a7a" opacity="0.25"/><rect x="33.4" y="55.6" width="1.2" height="1.2" fill="#7a7a7a" opacity="0.29"/><rect x="47.5" y="10.9" width="1.0" height="1.0" fill="#7a7a7a" opacity="0.29"/><rect x="37.1" y="8.1" width="1.2" height="1.2" fill="#7a7a7a" opacity="0.30"/><rect x="15.2" y="12.3" width="1.2" height="1.2" fill="#7a7a7a" opacity="0.23"/><rect x="52.9" y="39.5" width="0.8" height="0.8" fill="#7a7a7a" opacity="0.39"/><rect x="46.3" y="38.6" width="0.8" height="0.8" fill="#7a7a7a" opacity="0.25"/><rect x="21.0" y="12.1" width="1.2" height="1.2" fill="#7a7a7a" opacity="0.49"/><rect x="63.7" y="10.5" width="0.8" height="0.8" fill="#7a7a7a" opacity="0.37"/><rect x="24.6" y="63.0" width="1.2" height="1.2" fill="#7a7a7a" opacity="0.42"/><rect x="19.0" y="17.5" width="0.8" height="0.8" fill="#7a7a7a" opacity="0.16"/><rect x="18.0" y="56.7" width="0.8" height="0.8" fill="#7a7a7a" opacity="0.30"/><rect x="25.5" y="50.6" width="1.2" height="1.2" fill="#7a7a7a" opacity="0.38"/><rect x="62.8" y="19.0" width="1.0" height="1.0" fill="#7a7a7a" opacity="0.13"/><rect x="38.6" y="25.9" width="1.0" height="1.0" fill="#7a7a7a" opacity="0.40"/><rect x="44.9" y="37.6" width="0.8" height="0.8" fill="#7a7a7a" opacity="0.37"/><rect x="42.7" y="41.8" width="1.2" height="1.2" fill="#7a7a7a" opacity="0.45"/><rect x="44.8" y="54.6" width="1.2" height="1.2" fill="#7a7a7a" opacity="0.38"/><rect x="7.9" y="27.7" width="1.2" height="1.2" fill="#7a7a7a" opacity="0.22"/><rect x="6.3" y="26.9" width="1.2" height="1.2" fill="#7a7a7a" opacity="0.42"/><rect x="45.6" y="10.0" width="1.0" height="1.0" fill="#7a7a7a" opacity="0.44"/><rect x="29.1" y="39.8" width="1.2" height="1.2" fill="#7a7a7a" opacity="0.28"/><rect x="42.3" y="55.9" width="1.0" height="1.0" fill="#7a7a7a" opacity="0.46"/><rect x="49.8" y="24.9" width="0.8" height="0.8" fill="#7a7a7a" opacity="0.31"/><rect x="2.4" y="34.8" width="0.8" height="0.8" fill="#7a7a7a" opacity="0.18"/><rect x="33.2" y="6.5" width="1.2" height="1.2" fill="#7a7a7a" opacity="0.34"/><rect x="13.1" y="30.4" width="1.0" height="1.0" fill="#7a7a7a" opacity="0.13"/><rect x="33.4" y="26.3" width="0.8" height="0.8" fill="#7a7a7a" opacity="0.48"/><rect x="63.4" y="11.8" width="0.8" height="0.8" fill="#7a7a7a" opacity="0.32"/><rect x="46.7" y="39.3" width="1.0" height="1.0" fill="#7a7a7a" opacity="0.36"/><rect x="17.6" y="25.6" width="1.0" height="1.0" fill="#7a7a7a" opacity="0.13"/><rect x="58.6" y="40.2" width="1.2" height="1.2" fill="#7a7a7a" opacity="0.38"/></pattern></defs><rect width="690" height="366" fill="url(#bg)"/></svg>
<div class="a" style="left:0;top:0.5px;width:690px;height:1px;background:#f4f4f4"></div>
<div id="s"><div id="w">
<div class="a" style="left:0;top:0;width:1250px;height:50px;background:#3c8dbc"></div>
<div class="a" style="left:0;top:0;width:230px;height:50px;background:#367fa9"></div>
<div class="a" style="left:0;top:0;width:1250px;height:2px;background:rgba(255,255,255,.12)"></div>
<div class="t" style="left:82.8px;top:15.2px;font-size:21.5px;color:#fff;font-weight:700;transform:scaleX(0.912);transform-origin:0 0">Pi-hole</div>
<svg class="a" style="left:247px;top:18px" width="15" height="14" viewBox="0 0 15 14"><path d="M7.2 1.5L2 7L7.2 12.5M13.2 1.5L8 7L13.2 12.5" stroke="#fff" stroke-width="3.2" fill="none"/></svg>
<div class="t" style="left:1021.1px;top:18.3px;font-size:13.4px;color:#fff;font-weight:400;-webkit-text-stroke:0.45px #fff">hostname:</div>
<div class="a" style="left:1086px;top:16px;width:86px;height:22px;background:#f4e4ea;filter:blur(4px);border-radius:8px"></div>
<div class="a" style="left:1096px;top:21px;width:64px;height:12px;background:#f2c9d6;filter:blur(4px);border-radius:6px"></div>
<div class="a" style="left:1200.5px;top:0;width:48.5px;height:50px;background:#367fa9"></div>
<svg class="a" style="left:1217.5px;top:18.5px" width="15" height="13" viewBox="0 0 15 13"><rect x="0" y="0" width="15" height="13" fill="#fff"/><rect x="1.6" y="3.2" width="11.8" height="2.2" fill="#367fa9"/><rect x="1.6" y="7.6" width="11.8" height="2.2" fill="#367fa9"/></svg>
<div class="a" style="left:0;top:50px;width:230px;height:950px;background:#222d32"></div>
<svg class="a" style="left:21px;top:64px" width="56" height="80" viewBox="0 0 56 80"><path d="M3 4 C15 2.5 26 11 27.5 26 C14 26.5 4.5 18.5 3 4Z" fill="#17cf1f"/><path d="M28.5 25.5 C31 16 39 11 49.5 12.5 C48 22 39 27 28.5 25.5Z" fill="#17cf1f"/><g transform="translate(28 52) rotate(45)"><clipPath id="lc"><rect x="-20.5" y="-20.5" width="41" height="41" rx="9"/></clipPath><g clip-path="url(#lc)"><rect x="-20" y="-20" width="40" height="40" fill="#a50a12"/><rect x="-22" y="-22" width="21" height="21" rx="6" fill="#f0161f"/><rect x="1" y="1" width="21" height="21" rx="6" fill="#f0161f"/></g><path d="M-6.5 -6.5 Q0 -2 6.5 -6.5 Q2 0 6.5 6.5 Q0 2 -6.5 6.5 Q-2 0 -6.5 -6.5Z" fill="#2a3338"/></g></svg>
<div class="t" style="left:96.7px;top:61.7px;font-size:13.7px;color:#fff;font-weight:400;-webkit-text-stroke:0.4px #fff">Status</div>
<div class="a" style="left:96.9px;top:83.5px;width:12px;height:12px;border-radius:50%;background:#80ea00;box-shadow:0 0 0 1.5px #141a30"></div>
<div class="t" style="left:110.9px;top:85.1px;font-size:9.9px;color:#fff;font-weight:400;-webkit-text-stroke:0.25px #fff">Active</div>
<div class="a" style="left:96.9px;top:100.6px;width:12px;height:12px;border-radius:50%;background:#80ea00;box-shadow:0 0 0 1.5px #141a30"></div>
<div class="t" style="left:110.9px;top:102.2px;font-size:9.9px;color:#fff;font-weight:400;-webkit-text-stroke:0.25px #fff">Load:&nbsp;&nbsp;0.06&nbsp;&nbsp;0.04&nbsp;&nbsp;0.01</div>
<div class="a" style="left:96.9px;top:115.5px;width:12px;height:12px;border-radius:50%;background:#80ea00;box-shadow:0 0 0 1.5px #141a30"></div>
<div class="t" style="left:110.9px;top:117.1px;font-size:9.9px;color:#fff;font-weight:400;-webkit-text-stroke:0.25px #fff">Memory usage:&nbsp;&nbsp;2.1&thinsp;%</div>
<svg class="a" style="left:97.5px;top:130.9px" width="11" height="14" viewBox="0 0 11 14"><path d="M5 0.8 C8.5 3.5 10.2 6.5 10.2 8.8 A4.8 4.8 0 0 1 0.6 8.8 C0.6 6.8 1.8 5 3 3.8 C3.3 5.5 4.2 6.2 5.2 6.2 C6 4.5 5.8 2.5 5 0.8Z" fill="#2a6bf0"/></svg>
<div class="t" style="left:110.9px;top:133.5px;font-size:9.9px;color:#fff;font-weight:400;-webkit-text-stroke:0.25px #fff">Temp:&nbsp;23.4&nbsp;°C</div>
<div class="a" style="left:0;top:156.5px;width:230px;height:2.5px;background:#192125"></div>
<div class="t" style="left:45.5px;top:175.5px;font-size:13.0px;color:#c2d0d6;font-weight:400;-webkit-text-stroke:0.35px #c2d0d6">Dashboard</div>
<svg class="a" style="left:18.5px;top:173.5px" width="17" height="17" viewBox="0 0 16 16"><path d="M8 1.5L0.8 7.8H2.8V14H6.4V10.2H9.6V14H13.2V7.8H15.2Z" fill="#dfe7eb"/></svg>
<div class="a" style="left:0;top:205px;width:230px;height:44px;background:#1e282c"></div>
<div class="a" style="left:0;top:205px;width:3px;height:44px;background:#3c8dbc"></div>
<div class="t" style="left:45.5px;top:220.5px;font-size:13.0px;color:#fff;font-weight:400;-webkit-text-stroke:0.35px #fff">Query Log</div>
<svg class="a" style="left:18.5px;top:218.5px" width="17" height="17" viewBox="0 0 16 16"><path d="M3 1H9.5L13 4.5V15H3Z" fill="#fff"/><path d="M6 9H10M6 11.5H10" stroke="#1e282c" stroke-width="1.3"/></svg>
<div class="t" style="left:45.5px;top:265.5px;font-size:13.0px;color:#c2d0d6;font-weight:400;-webkit-text-stroke:0.35px #c2d0d6">Long-term Data</div>
<svg class="a" style="left:18.5px;top:263.5px" width="17" height="17" viewBox="0 0 16 16"><path d="M3.2 4.5A6 6 0 1 1 2.2 9.5" stroke="#dfe7eb" stroke-width="2" fill="none"/><path d="M1 2V6.5H5.5Z" fill="#dfe7eb"/><path d="M8.2 4.8V8.6L10.8 10.4" stroke="#dfe7eb" stroke-width="1.8" fill="none"/></svg>
<svg class="a" style="left:204px;top:266.5px" width="9" height="12" viewBox="0 0 9 12"><path d="M7 1.2L2.2 6L7 10.8" stroke="#dfe7eb" stroke-width="3.2" fill="none"/></svg>
<div class="t" style="left:45.5px;top:312.5px;font-size:13.0px;color:#c2d0d6;font-weight:400;-webkit-text-stroke:0.35px #c2d0d6">Groups</div>
<svg class="a" style="left:18.5px;top:310.5px" width="17" height="17" viewBox="0 0 16 16"><circle cx="5" cy="4.5" r="2.8" fill="#dfe7eb"/><circle cx="11.5" cy="4.5" r="2.6" fill="#dfe7eb"/><path d="M0.5 13.5Q0.5 8.5 5 8.5Q9.5 8.5 9.5 13.5Z" fill="#dfe7eb"/><path d="M10.3 13.5Q10.3 10 9.3 8.8Q10.5 8.3 11.5 8.3Q15.5 8.3 15.5 13.5Z" fill="#dfe7eb"/></svg>
<div class="t" style="left:45.5px;top:356.5px;font-size:13.0px;color:#c2d0d6;font-weight:400;-webkit-text-stroke:0.35px #c2d0d6">Clients</div>
<svg class="a" style="left:18.5px;top:354.5px" width="17" height="17" viewBox="0 0 16 16"><rect x="2.6" y="2.6" width="10.8" height="8" stroke="#dfe7eb" stroke-width="1.8" fill="none"/><path d="M0.5 12.5H15.5V14.5H0.5Z" fill="#dfe7eb"/></svg>
<div class="t" style="left:45.5px;top:400.5px;font-size:13.0px;color:#c2d0d6;font-weight:400;-webkit-text-stroke:0.35px #c2d0d6">Domains</div>
<svg class="a" style="left:18.5px;top:398.5px" width="17" height="17" viewBox="0 0 16 16"><rect x="1.5" y="2" width="3" height="3" fill="#dfe7eb"/><rect x="1.5" y="6.5" width="3" height="3" fill="#dfe7eb"/><rect x="1.5" y="11" width="3" height="3" fill="#dfe7eb"/><rect x="6" y="2" width="9" height="3" fill="#dfe7eb"/><rect x="6" y="6.5" width="9" height="3" fill="#dfe7eb"/><rect x="6" y="11" width="9" height="3" fill="#dfe7eb"/></svg>
<div class="t" style="left:45.5px;top:444.5px;font-size:13.0px;color:#c2d0d6;font-weight:400;-webkit-text-stroke:0.35px #c2d0d6">Adlists</div>
<svg class="a" style="left:18.5px;top:442.5px" width="17" height="17" viewBox="0 0 16 16"><path d="M8 0.8L14.5 3.3Q14.5 12 8 15.2Q1.5 12 1.5 3.3Z" fill="#dfe7eb"/><path d="M8 3V12.8Q4 10.5 4 5Z" fill="#222d32" opacity="0.6"/></svg>
<div class="t" style="left:45.5px;top:489.5px;font-size:13.0px;color:#c2d0d6;font-weight:400;-webkit-text-stroke:0.35px #c2d0d6">Disable Blocking</div>
<svg class="a" style="left:18.5px;top:487.5px" width="17" height="17" viewBox="0 0 16 16"><rect x="1.5" y="1.5" width="13" height="13" rx="1.5" fill="#dfe7eb"/><path d="M5.8 1.5V14.5M10.2 1.5V14.5M1.5 5.8H14.5M1.5 10.2H14.5" stroke="#222d32" stroke-width="1"/></svg>
<svg class="a" style="left:204px;top:490.5px" width="9" height="12" viewBox="0 0 9 12"><path d="M7 1.2L2.2 6L7 10.8" stroke="#dfe7eb" stroke-width="3.2" fill="none"/></svg>
<div class="t" style="left:45.5px;top:533.5px;font-size:13.0px;color:#c2d0d6;font-weight:400;-webkit-text-stroke:0.35px #c2d0d6">Local DNS</div>
<svg class="a" style="left:18.5px;top:531.5px" width="17" height="17" viewBox="0 0 16 16"><rect x="2.5" y="1" width="11" height="14" rx="1.5" fill="#dfe7eb"/><circle cx="8" cy="6.5" r="2" fill="#222d32"/><path d="M4.8 11.5Q8 8 11.2 11.5" stroke="#222d32" stroke-width="1.4" fill="none"/></svg>
<svg class="a" style="left:204px;top:534.5px" width="9" height="12" viewBox="0 0 9 12"><path d="M7 1.2L2.2 6L7 10.8" stroke="#dfe7eb" stroke-width="3.2" fill="none"/></svg>
<div class="t" style="left:45.5px;top:579.5px;font-size:13.0px;color:#c2d0d6;font-weight:400;-webkit-text-stroke:0.35px #c2d0d6">Tools</div>
<svg class="a" style="left:18.5px;top:577.5px" width="17" height="17" viewBox="0 0 16 16"><path d="M2 2L14 14M14 2L2 14" stroke="#dfe7eb" stroke-width="2.4"/><circle cx="3" cy="3" r="2.5" fill="#dfe7eb"/><path d="M11 11L15 15" stroke="#dfe7eb" stroke-width="3.4"/></svg>
<svg class="a" style="left:204px;top:580.5px" width="9" height="12" viewBox="0 0 9 12"><path d="M7 1.2L2.2 6L7 10.8" stroke="#dfe7eb" stroke-width="3.2" fill="none"/></svg>
<div class="t" style="left:45.5px;top:623.5px;font-size:13.0px;color:#c2d0d6;font-weight:400;-webkit-text-stroke:0.35px #c2d0d6">Settings</div>
<svg class="a" style="left:18.5px;top:621.5px" width="17" height="17" viewBox="0 0 16 16"><circle cx="8" cy="8" r="5" fill="#dfe7eb"/><path d="M8 0.8V15.2M0.8 8H15.2M2.9 2.9L13.1 13.1M13.1 2.9L2.9 13.1" stroke="#dfe7eb" stroke-width="2.6"/><circle cx="8" cy="8" r="2" fill="#222d32"/></svg>
<div class="t" style="left:45.5px;top:669.5px;font-size:13.0px;color:#c2d0d6;font-weight:400;-webkit-text-stroke:0.35px #c2d0d6">Donate</div>
<svg class="a" style="left:18.5px;top:667.5px" width="17" height="17" viewBox="0 0 16 16"><circle cx="8" cy="6" r="4.8" fill="#dfe7eb"/><circle cx="8" cy="6" r="2.5" fill="#222d32"/><path d="M1 11.5H15V15H1Z" fill="#dfe7eb"/><path d="M3 13.2H13" stroke="#222d32" stroke-width="0.9"/></svg>
<div class="a" style="left:0;top:203.5px;width:230px;height:2.5px;background:#192125"></div>
<div class="a" style="left:0;top:248.5px;width:230px;height:2.5px;background:#192125"></div>
<div class="a" style="left:0;top:295.0px;width:230px;height:2.5px;background:#192125"></div>
<div class="a" style="left:0;top:472.0px;width:230px;height:2.5px;background:#192125"></div>
<div class="a" style="left:0;top:563.0px;width:230px;height:2.5px;background:#192125"></div>
<div class="a" style="left:0;top:652.5px;width:230px;height:2.5px;background:#192125"></div>
<div class="a" style="left:245px;top:65px;width:990px;height:950px;background:#fff;border-top:3px solid #cdd2da;border-radius:7px;box-shadow:0 0 1.5px rgba(0,0,0,.12)"></div>
<div class="a" style="left:245px;top:108px;width:990px;height:1px;background:#f4f4f4"></div>
<div class="t" style="left:255.8px;top:80.0px;font-size:16.56px;color:#444;font-weight:400;">Recent Queries (showing up to 100 queries), <span style="color:#3c8dbc">show all</span></div>
<div class="t" style="left:255.5px;top:163.2px;font-size:12.4px;color:#333;font-weight:400;-webkit-text-stroke:0.12px #333">Show</div>
<div class="a" style="left:290.3px;top:154.4px;width:74.6px;height:30px;border:1px solid #d2d6de;box-sizing:border-box;background:#fff"></div>
<div class="t" style="left:305.0px;top:164.5px;font-size:10px;color:#555;font-weight:400;">10</div>
<svg class="a" style="left:347px;top:164px" width="11" height="8" viewBox="0 0 11 8"><path d="M1.2 1.5L5.5 6L9.8 1.5" stroke="#333" stroke-width="2.6" fill="none"/></svg>
<div class="t" style="left:368.6px;top:162.7px;font-size:13.0px;color:#333;font-weight:400;-webkit-text-stroke:0.12px #333">entries</div>
<div class="t" style="left:1021.3px;top:127.1px;font-size:12.5px;color:#333;font-weight:400;-webkit-text-stroke:0.4px #333">Search:</div>
<div class="a" style="left:1071px;top:118.8px;width:155px;height:29.6px;border:1px solid #d2d6de;box-sizing:border-box;background:#fff"></div>
<div class="t" style="left:1082.4px;top:130.3px;font-size:11.3px;color:#999;font-weight:400;">Type / Domain / Client</div>
<div class="a" style="left:890.3px;top:157.1px;width:333.5px;height:33.5px;border:1px solid #ddd;box-sizing:border-box;border-radius:4px;background:#fafafa"></div>
<div class="t" style="left:890.3px;width:64.10000000000002px;text-align:center;top:169.4px;font-size:13.2px;color:#777;-webkit-text-stroke:0.15px #777">Previous</div>
<div class="a" style="left:954.4px;top:157.1px;width:1px;height:33.5px;background:#ddd"></div>
<div class="a" style="left:954.4px;top:157.1px;width:33.60000000000002px;height:33.5px;background:#3071b3;border:1px solid #2a65a0;box-sizing:border-box"></div>
<div class="t" style="left:954.4px;width:33.60000000000002px;text-align:center;top:169.4px;font-size:13.2px;color:#fff;-webkit-text-stroke:0.15px #fff">1</div>
<div class="a" style="left:988.0px;top:157.1px;width:1px;height:33.5px;background:#ddd"></div>
<div class="t" style="left:988.0px;width:32.10000000000002px;text-align:center;top:169.4px;font-size:13.2px;color:#444;-webkit-text-stroke:0.15px #444">2</div>
<div class="a" style="left:1020.1px;top:157.1px;width:1px;height:33.5px;background:#ddd"></div>
<div class="t" style="left:1020.1px;width:31.800000000000068px;text-align:center;top:169.4px;font-size:13.2px;color:#444;-webkit-text-stroke:0.15px #444">3</div>
<div class="a" style="left:1051.9px;top:157.1px;width:1px;height:33.5px;background:#ddd"></div>
<div class="t" style="left:1051.9px;width:34.299999999999955px;text-align:center;top:169.4px;font-size:13.2px;color:#444;-webkit-text-stroke:0.15px #444">4</div>
<div class="a" style="left:1086.2px;top:157.1px;width:1px;height:33.5px;background:#ddd"></div>
<div class="t" style="left:1086.2px;width:33.299999999999955px;text-align:center;top:169.4px;font-size:13.2px;color:#444;-webkit-text-stroke:0.15px #444">5</div>
<div class="a" style="left:1119.5px;top:157.1px;width:1px;height:33.5px;background:#ddd"></div>
<div class="t" style="left:1119.5px;width:32.0px;text-align:center;top:169.4px;font-size:13.2px;color:#444;-webkit-text-stroke:0.15px #444">…</div>
<div class="a" style="left:1151.5px;top:157.1px;width:1px;height:33.5px;background:#ddd"></div>
<div class="t" style="left:1151.5px;width:34.59999999999991px;text-align:center;top:169.4px;font-size:13.2px;color:#444;-webkit-text-stroke:0.15px #444">10</div>
<div class="a" style="left:1186.1px;top:157.1px;width:1px;height:33.5px;background:#ddd"></div>
<div class="t" style="left:1186.1px;width:37.700000000000045px;text-align:center;top:169.4px;font-size:13.2px;color:#444;-webkit-text-stroke:0.15px #444">Next</div>
<div class="a" style="left:256.3px;top:204.6px;width:968.8px;height:36.8px;background:#fff"></div>
<div class="a" style="left:256.3px;top:241.4px;width:968.8px;height:57.2px;background:#e4ebe5;border-top:1px solid #f4f4f4;box-sizing:border-box"></div>
<div class="a" style="left:256.3px;top:298.6px;width:968.8px;height:57.2px;background:#edf3ee;border-top:1px solid #f4f4f4;box-sizing:border-box"></div>
<div class="a" style="left:256.3px;top:355.7px;width:968.8px;height:57.2px;background:#e4ebe5;border-top:1px solid #f4f4f4;box-sizing:border-box"></div>
<div class="a" style="left:256.3px;top:412.9px;width:968.8px;height:57.2px;background:#edf3ee;border-top:1px solid #f4f4f4;box-sizing:border-box"></div>
<div class="a" style="left:256.3px;top:470.1px;width:968.8px;height:57.2px;background:#e4ebe5;border-top:1px solid #f4f4f4;box-sizing:border-box"></div>
<div class="a" style="left:256.3px;top:527.2px;width:968.8px;height:57.2px;background:#edf3ee;border-top:1px solid #f4f4f4;box-sizing:border-box"></div>
<div class="a" style="left:256.3px;top:584.4px;width:968.8px;height:57.2px;background:#e4ebe5;border-top:1px solid #f4f4f4;box-sizing:border-box"></div>
<div class="a" style="left:256.3px;top:641.6px;width:968.8px;height:57.2px;background:#edf3ee;border-top:1px solid #f4f4f4;box-sizing:border-box"></div>
<div class="a" style="left:256.3px;top:698.8px;width:968.8px;height:57.2px;background:#e4ebe5;border-top:1px solid #f4f4f4;box-sizing:border-box"></div>
<div class="a" style="left:256.3px;top:755.9px;width:968.8px;height:57.2px;background:#edf3ee;border-top:1px solid #f4f4f4;box-sizing:border-box"></div>
<div class="a" style="left:256.3px;top:813.1px;width:968.8px;height:39px;background:#fff;border:1px solid #f4f4f4;box-sizing:border-box"></div>
<div class="a" style="left:255.8px;top:204.6px;width:1px;height:647.5px;background:#f4f4f4"></div>
<div class="a" style="left:396.2px;top:204.6px;width:1px;height:647.5px;background:#f4f4f4"></div>
<div class="a" style="left:464.5px;top:204.6px;width:1px;height:647.5px;background:#f4f4f4"></div>
<div class="a" style="left:779.2px;top:204.6px;width:1px;height:647.5px;background:#f4f4f4"></div>
<div class="a" style="left:856.0px;top:204.6px;width:1px;height:647.5px;background:#f4f4f4"></div>
<div class="a" style="left:1055.6px;top:204.6px;width:1px;height:647.5px;background:#f4f4f4"></div>
<div class="a" style="left:1133.7px;top:204.6px;width:1px;height:647.5px;background:#f4f4f4"></div>
<div class="a" style="left:1224.6px;top:204.6px;width:1px;height:647.5px;background:#f4f4f4"></div>
<div class="a" style="left:256.3px;top:204.6px;width:968.8px;height:1px;background:#f4f4f4"></div>
<div class="t" style="left:264.3px;top:216.5px;font-size:12.9px;color:#333;font-weight:700;">Time</div>
<div class="t" style="left:264.3px;top:826.6px;font-size:12.9px;color:#333;font-weight:700;">Time</div>
<svg class="a" style="left:372.7px;top:212.6px;width:16px;height:17px;opacity:0.75" viewBox="0 0 16 17"><path d="M4 1.5V15M1.8 12.2L4 15L6.2 12.2M12 15V1.5M9.8 4.3L12 1.5L14.2 4.3" stroke="#333" stroke-width="1.5" fill="none"/></svg>
<div class="t" style="left:404.7px;top:216.5px;font-size:12.9px;color:#333;font-weight:700;">Type</div>
<div class="t" style="left:404.7px;top:826.6px;font-size:12.9px;color:#333;font-weight:700;">Type</div>
<svg class="a" style="left:441.0px;top:212.6px;width:16px;height:17px;opacity:0.45" viewBox="0 0 16 17"><path d="M4 1.5V15M1.8 12.2L4 15L6.2 12.2M12 15V1.5M9.8 4.3L12 1.5L14.2 4.3" stroke="#333" stroke-width="1.5" fill="none"/></svg>
<div class="t" style="left:473.0px;top:216.5px;font-size:12.9px;color:#333;font-weight:700;">Domain</div>
<div class="t" style="left:473.0px;top:826.6px;font-size:12.9px;color:#333;font-weight:700;">Domain</div>
<svg class="a" style="left:755.7px;top:212.6px;width:16px;height:17px;opacity:0.45" viewBox="0 0 16 17"><path d="M4 1.5V15M1.8 12.2L4 15L6.2 12.2M12 15V1.5M9.8 4.3L12 1.5L14.2 4.3" stroke="#333" stroke-width="1.5" fill="none"/></svg>
<div class="t" style="left:787.7px;top:216.5px;font-size:12.9px;color:#333;font-weight:700;">Client</div>
<div class="t" style="left:787.7px;top:826.6px;font-size:12.9px;color:#333;font-weight:700;">Client</div>
<svg class="a" style="left:832.5px;top:212.6px;width:16px;height:17px;opacity:0.45" viewBox="0 0 16 17"><path d="M4 1.5V15M1.8 12.2L4 15L6.2 12.2M12 15V1.5M9.8 4.3L12 1.5L14.2 4.3" stroke="#333" stroke-width="1.5" fill="none"/></svg>
<div class="t" style="left:864.5px;top:216.5px;font-size:12.9px;color:#333;font-weight:700;">Status</div>
<div class="t" style="left:864.5px;top:826.6px;font-size:12.9px;color:#333;font-weight:700;">Status</div>
<svg class="a" style="left:1032.1px;top:212.6px;width:16px;height:17px;opacity:0.45" viewBox="0 0 16 17"><path d="M4 1.5V15M1.8 12.2L4 15L6.2 12.2M12 15V1.5M9.8 4.3L12 1.5L14.2 4.3" stroke="#333" stroke-width="1.5" fill="none"/></svg>
<div class="t" style="left:1064.1px;top:216.5px;font-size:12.9px;color:#333;font-weight:700;">Reply</div>
<div class="t" style="left:1064.1px;top:826.6px;font-size:12.9px;color:#333;font-weight:700;">Reply</div>
<svg class="a" style="left:1110.2px;top:212.6px;width:16px;height:17px;opacity:0.45" viewBox="0 0 16 17"><path d="M4 1.5V15M1.8 12.2L4 15L6.2 12.2M12 15V1.5M9.8 4.3L12 1.5L14.2 4.3" stroke="#333" stroke-width="1.5" fill="none"/></svg>
<div class="t" style="left:1142.2px;top:216.5px;font-size:12.9px;color:#333;font-weight:700;">Action</div>
<div class="t" style="left:1142.2px;top:826.6px;font-size:12.9px;color:#333;font-weight:700;">Action</div>
<svg class="a" style="left:1201.1px;top:212.6px;width:16px;height:17px;opacity:0.45" viewBox="0 0 16 17"><path d="M4 1.5V15M1.8 12.2L4 15L6.2 12.2M12 15V1.5M9.8 4.3L12 1.5L14.2 4.3" stroke="#333" stroke-width="1.5" fill="none"/></svg>
<div class="t" style="left:264.3px;top:255.9px;font-size:12.55px;color:#333;font-weight:400;-webkit-text-stroke:0.2px #333">2022-11-22 09:13:01</div>
<div class="t" style="left:404.7px;top:256.7px;font-size:11.6px;color:#333;font-weight:400;-webkit-text-stroke:0.2px #333">DNSKEY</div>
<div class="t" style="left:473.0px;top:255.9px;font-size:12.55px;color:#333;font-weight:400;-webkit-text-stroke:0.2px #333">tv</div>
<div class="a" style="left:787.7px;top:255.39999999999998px;width:42px;height:12px;background:#cdd2ce;filter:blur(3px);border-radius:4px"></div>
<div class="t" style="left:864.5px;top:255.5px;font-size:12.95px;color:#333;font-weight:400;-webkit-text-stroke:0.2px #333"><span style="color:#1f9d4a;-webkit-text-stroke:0.3px #1f9d4a">OK</span> (sent to dns.quad9.net#53)</div>
<div class="t" style="left:864.5px;top:275.9px;font-size:11.6px;color:#f39c12;font-weight:400;-webkit-text-stroke:0.2px #f39c12">INSECURE</div>
<div class="t" style="left:1064.1px;top:255.9px;font-size:12.5px;color:#333;font-weight:400;-webkit-text-stroke:0.2px #333">N/A</div>
<div class="t" style="left:264.3px;top:313.0px;font-size:12.55px;color:#333;font-weight:400;-webkit-text-stroke:0.2px #333">2022-11-22 09:13:01</div>
<div class="t" style="left:404.7px;top:313.9px;font-size:11.6px;color:#333;font-weight:400;-webkit-text-stroke:0.2px #333">DNSKEY</div>
<div class="t" style="left:473.0px;top:313.0px;font-size:12.55px;color:#333;font-weight:400;-webkit-text-stroke:0.2px #333">tv</div>
<div class="a" style="left:787.7px;top:312.57px;width:42px;height:12px;background:#cdd2ce;filter:blur(3px);border-radius:4px"></div>
<div class="t" style="left:864.5px;top:312.7px;font-size:12.95px;color:#333;font-weight:400;-webkit-text-stroke:0.2px #333"><span style="color:#1f9d4a;-webkit-text-stroke:0.3px #1f9d4a">OK</span> (sent to dns9.quad9.net#53)</div>
<div class="t" style="left:864.5px;top:333.1px;font-size:11.6px;color:#f39c12;font-weight:400;-webkit-text-stroke:0.2px #f39c12">INSECURE</div>
<div class="t" style="left:1064.1px;top:313.1px;font-size:12.5px;color:#333;font-weight:400;-webkit-text-stroke:0.2px #333">N/A</div>
<div class="t" style="left:264.3px;top:370.2px;font-size:12.55px;color:#333;font-weight:400;-webkit-text-stroke:0.2px #333">2022-11-22 09:13:01</div>
<div class="t" style="left:404.7px;top:371.0px;font-size:11.6px;color:#333;font-weight:400;-webkit-text-stroke:0.2px #333">A</div>
<div class="t" style="left:473.0px;top:370.2px;font-size:12.55px;color:#333;font-weight:400;-webkit-text-stroke:0.2px #333">plex.tv</div>
<div class="a" style="left:787.7px;top:369.74px;width:42px;height:12px;background:#cdd2ce;filter:blur(3px);border-radius:4px"></div>
<div class="a" style="left:787.7px;top:388.74px;width:28px;height:12px;background:#cdd2ce;filter:blur(3px);border-radius:4px"></div>
<div class="t" style="left:864.5px;top:370.2px;font-size:12.55px;color:#333;font-weight:400;-webkit-text-stroke:0.2px #333">Unknown (0)</div>
<div class="t" style="left:1064.1px;top:370.3px;font-size:12.5px;color:#333;font-weight:400;-webkit-text-stroke:0.2px #333">N/A</div>
<div class="t" style="left:264.3px;top:427.4px;font-size:12.55px;color:#333;font-weight:400;-webkit-text-stroke:0.2px #333">2022-11-22 09:13:00</div>
<div class="t" style="left:404.7px;top:428.2px;font-size:11.6px;color:#333;font-weight:400;-webkit-text-stroke:0.2px #333">DNSKEY</div>
<div class="t" style="left:473.0px;top:427.4px;font-size:12.55px;color:#333;font-weight:400;-webkit-text-stroke:0.2px #333">tv</div>
<div class="a" style="left:787.7px;top:426.90999999999997px;width:42px;height:12px;background:#cdd2ce;filter:blur(3px);border-radius:4px"></div>
<div class="t" style="left:864.5px;top:427.0px;font-size:12.95px;color:#333;font-weight:400;-webkit-text-stroke:0.2px #333"><span style="color:#1f9d4a;-webkit-text-stroke:0.3px #1f9d4a">OK</span> (sent to dns.quad9.net#53)</div>
<div class="t" style="left:864.5px;top:447.4px;font-size:11.6px;color:#f39c12;font-weight:400;-webkit-text-stroke:0.2px #f39c12">INSECURE</div>
<div class="t" style="left:1064.1px;top:427.4px;font-size:12.5px;color:#333;font-weight:400;-webkit-text-stroke:0.2px #333">N/A</div>
<div class="t" style="left:264.3px;top:484.6px;font-size:12.55px;color:#333;font-weight:400;-webkit-text-stroke:0.2px #333">2022-11-22 09:13:00</div>
<div class="t" style="left:404.7px;top:485.4px;font-size:11.6px;color:#333;font-weight:400;-webkit-text-stroke:0.2px #333">DNSKEY</div>
<div class="t" style="left:473.0px;top:484.6px;font-size:12.55px;color:#333;font-weight:400;-webkit-text-stroke:0.2px #333">tv</div>
<div class="a" style="left:787.7px;top:484.08px;width:42px;height:12px;background:#cdd2ce;filter:blur(3px);border-radius:4px"></div>
<div class="t" style="left:864.5px;top:484.2px;font-size:12.95px;color:#333;font-weight:400;-webkit-text-stroke:0.2px #333"><span style="color:#1f9d4a;-webkit-text-stroke:0.3px #1f9d4a">OK</span> (sent to dns9.quad9.net#53)</div>
<div class="t" style="left:864.5px;top:504.6px;font-size:11.6px;color:#f39c12;font-weight:400;-webkit-text-stroke:0.2px #f39c12">INSECURE</div>
<div class="t" style="left:1064.1px;top:484.6px;font-size:12.5px;color:#333;font-weight:400;-webkit-text-stroke:0.2px #333">N/A</div>
<div class="t" style="left:264.3px;top:541.7px;font-size:12.55px;color:#333;font-weight:400;-webkit-text-stroke:0.2px #333">2022-11-22 09:13:00</div>
<div class="t" style="left:404.7px;top:542.5px;font-size:11.6px;color:#333;font-weight:400;-webkit-text-stroke:0.2px #333">A</div>
<div class="t" style="left:473.0px;top:541.7px;font-size:12.55px;color:#333;font-weight:400;-webkit-text-stroke:0.2px #333">plex.tv</div>
<div class="a" style="left:787.7px;top:541.25px;width:42px;height:12px;background:#cdd2ce;filter:blur(3px);border-radius:4px"></div>
<div class="a" style="left:787.7px;top:560.25px;width:28px;height:12px;background:#cdd2ce;filter:blur(3px);border-radius:4px"></div>
<div class="t" style="left:864.5px;top:541.7px;font-size:12.55px;color:#333;font-weight:400;-webkit-text-stroke:0.2px #333">Unknown (0)</div>
<div class="t" style="left:1064.1px;top:541.8px;font-size:12.5px;color:#333;font-weight:400;-webkit-text-stroke:0.2px #333">N/A</div>
<div class="t" style="left:264.3px;top:598.9px;font-size:12.55px;color:#333;font-weight:400;-webkit-text-stroke:0.2px #333">2022-11-22 09:13:00</div>
<div class="t" style="left:404.7px;top:599.7px;font-size:11.6px;color:#333;font-weight:400;-webkit-text-stroke:0.2px #333">DNSKEY</div>
<div class="t" style="left:473.0px;top:598.9px;font-size:12.55px;color:#333;font-weight:400;-webkit-text-stroke:0.2px #333">tv</div>
<div class="a" style="left:787.7px;top:598.42px;width:42px;height:12px;background:#cdd2ce;filter:blur(3px);border-radius:4px"></div>
<div class="t" style="left:864.5px;top:598.6px;font-size:12.95px;color:#333;font-weight:400;-webkit-text-stroke:0.2px #333"><span style="color:#1f9d4a;-webkit-text-stroke:0.3px #1f9d4a">OK</span> (sent to dns.quad9.net#53)</div>
<div class="t" style="left:864.5px;top:618.9px;font-size:11.6px;color:#f39c12;font-weight:400;-webkit-text-stroke:0.2px #f39c12">INSECURE</div>
<div class="t" style="left:1064.1px;top:598.9px;font-size:12.5px;color:#333;font-weight:400;-webkit-text-stroke:0.2px #333">N/A</div>
<div class="t" style="left:264.3px;top:656.1px;font-size:12.55px;color:#333;font-weight:400;-webkit-text-stroke:0.2px #333">2022-11-22 09:13:00</div>
<div class="t" style="left:404.7px;top:656.9px;font-size:11.6px;color:#333;font-weight:400;-webkit-text-stroke:0.2px #333">DNSKEY</div>
<div class="t" style="left:473.0px;top:656.1px;font-size:12.55px;color:#333;font-weight:400;-webkit-text-stroke:0.2px #333">tv</div>
<div class="a" style="left:787.7px;top:655.5899999999999px;width:42px;height:12px;background:#cdd2ce;filter:blur(3px);border-radius:4px"></div>
<div class="t" style="left:864.5px;top:655.7px;font-size:12.95px;color:#333;font-weight:400;-webkit-text-stroke:0.2px #333"><span style="color:#1f9d4a;-webkit-text-stroke:0.3px #1f9d4a">OK</span> (sent to dns9.quad9.net#53)</div>
<div class="t" style="left:864.5px;top:676.1px;font-size:11.6px;color:#f39c12;font-weight:400;-webkit-text-stroke:0.2px #f39c12">INSECURE</div>
<div class="t" style="left:1064.1px;top:656.1px;font-size:12.5px;color:#333;font-weight:400;-webkit-text-stroke:0.2px #333">N/A</div>
<div class="t" style="left:264.3px;top:713.2px;font-size:12.55px;color:#333;font-weight:400;-webkit-text-stroke:0.2px #333">2022-11-22 09:13:00</div>
<div class="t" style="left:404.7px;top:714.0px;font-size:11.6px;color:#333;font-weight:400;-webkit-text-stroke:0.2px #333">HTTPS</div>
<div class="t" style="left:473.0px;top:713.2px;font-size:12.55px;color:#333;font-weight:400;-webkit-text-stroke:0.2px #333">plex.tv</div>
<div class="a" style="left:787.7px;top:712.76px;width:42px;height:12px;background:#cdd2ce;filter:blur(3px);border-radius:4px"></div>
<div class="a" style="left:787.7px;top:731.76px;width:28px;height:12px;background:#cdd2ce;filter:blur(3px);border-radius:4px"></div>
<div class="t" style="left:864.5px;top:713.2px;font-size:12.55px;color:#333;font-weight:400;-webkit-text-stroke:0.2px #333">Unknown (0)</div>
<div class="t" style="left:1064.1px;top:713.3px;font-size:12.5px;color:#333;font-weight:400;-webkit-text-stroke:0.2px #333">N/A</div>
<div class="t" style="left:264.3px;top:770.4px;font-size:12.55px;color:#333;font-weight:400;-webkit-text-stroke:0.2px #333">2022-11-22 09:13:00</div>
<div class="t" style="left:404.7px;top:771.2px;font-size:11.6px;color:#333;font-weight:400;-webkit-text-stroke:0.2px #333">DNSKEY</div>
<div class="t" style="left:473.0px;top:770.4px;font-size:12.55px;color:#333;font-weight:400;-webkit-text-stroke:0.2px #333">tv</div>
<div class="a" style="left:787.7px;top:769.93px;width:42px;height:12px;background:#cdd2ce;filter:blur(3px);border-radius:4px"></div>
<div class="t" style="left:864.5px;top:770.1px;font-size:12.95px;color:#333;font-weight:400;-webkit-text-stroke:0.2px #333"><span style="color:#1f9d4a;-webkit-text-stroke:0.3px #1f9d4a">OK</span> (sent to dns.quad9.net#53)</div>
<div class="t" style="left:864.5px;top:790.4px;font-size:11.6px;color:#f39c12;font-weight:400;-webkit-text-stroke:0.2px #f39c12">INSECURE</div>
<div class="t" style="left:1064.1px;top:770.4px;font-size:12.5px;color:#333;font-weight:400;-webkit-text-stroke:0.2px #333">N/A</div>
<div class="a" style="left:256.25px;top:358.65px;width:958.65px;height:47.70px;border:3.0px solid #fc1218;border-radius:4px;box-shadow:0 0 0 2.5px rgba(225,252,252,.85),inset 0 0 0 2.5px rgba(225,252,252,.85)"></div>
<div class="a" style="left:256.25px;top:530.40px;width:958.65px;height:46.71px;border:3.0px solid #fc1218;border-radius:4px;box-shadow:0 0 0 2.5px rgba(225,252,252,.85),inset 0 0 0 2.5px rgba(225,252,252,.85)"></div>
<div class="a" style="left:256.25px;top:703.15px;width:958.65px;height:47.70px;border:3.0px solid #fc1218;border-radius:4px;box-shadow:0 0 0 2.5px rgba(225,252,252,.85),inset 0 0 0 2.5px rgba(225,252,252,.85)"></div>
<div class="t" style="left:256.0px;top:872.2px;font-size:12.77px;color:#333;font-weight:400;-webkit-text-stroke:0.2px #333">Showing 1 to 10 of 100 entries</div>
<div class="a" style="left:890.3px;top:860.5px;width:333.5px;height:33.5px;border:1px solid #ddd;box-sizing:border-box;border-radius:4px;background:#fafafa"></div>
<div class="t" style="left:890.3px;width:64.10000000000002px;text-align:center;top:872.8px;font-size:13.2px;color:#777;-webkit-text-stroke:0.15px #777">Previous</div>
<div class="a" style="left:954.4px;top:860.5px;width:1px;height:33.5px;background:#ddd"></div>
<div class="a" style="left:954.4px;top:860.5px;width:33.60000000000002px;height:33.5px;background:#3071b3;border:1px solid #2a65a0;box-sizing:border-box"></div>
<div class="t" style="left:954.4px;width:33.60000000000002px;text-align:center;top:872.8px;font-size:13.2px;color:#fff;-webkit-text-stroke:0.15px #fff">1</div>
<div class="a" style="left:988.0px;top:860.5px;width:1px;height:33.5px;background:#ddd"></div>
<div class="t" style="left:988.0px;width:32.10000000000002px;text-align:center;top:872.8px;font-size:13.2px;color:#444;-webkit-text-stroke:0.15px #444">2</div>
<div class="a" style="left:1020.1px;top:860.5px;width:1px;height:33.5px;background:#ddd"></div>
<div class="t" style="left:1020.1px;width:31.800000000000068px;text-align:center;top:872.8px;font-size:13.2px;color:#444;-webkit-text-stroke:0.15px #444">3</div>
<div class="a" style="left:1051.9px;top:860.5px;width:1px;height:33.5px;background:#ddd"></div>
<div class="t" style="left:1051.9px;width:34.299999999999955px;text-align:center;top:872.8px;font-size:13.2px;color:#444;-webkit-text-stroke:0.15px #444">4</div>
<div class="a" style="left:1086.2px;top:860.5px;width:1px;height:33.5px;background:#ddd"></div>
<div class="t" style="left:1086.2px;width:33.299999999999955px;text-align:center;top:872.8px;font-size:13.2px;color:#444;-webkit-text-stroke:0.15px #444">5</div>
<div class="a" style="left:1119.5px;top:860.5px;width:1px;height:33.5px;background:#ddd"></div>
<div class="t" style="left:1119.5px;width:32.0px;text-align:center;top:872.8px;font-size:13.2px;color:#444;-webkit-text-stroke:0.15px #444">…</div>
<div class="a" style="left:1151.5px;top:860.5px;width:1px;height:33.5px;background:#ddd"></div>
<div class="t" style="left:1151.5px;width:34.59999999999991px;text-align:center;top:872.8px;font-size:13.2px;color:#444;-webkit-text-stroke:0.15px #444">10</div>
<div class="a" style="left:1186.1px;top:860.5px;width:1px;height:33.5px;background:#ddd"></div>
<div class="t" style="left:1186.1px;width:37.700000000000045px;text-align:center;top:872.8px;font-size:13.2px;color:#444;-webkit-text-stroke:0.15px #444">Next</div>
<div class="a" style="left:245px;top:903.5px;width:990px;height:2px;background:#eef1f1"></div>
</div></div></div>
<div class="a" style="left:683px;top:46.5px;width:6px;height:366px;background:#f1f1f1"></div>
<div class="a" style="left:684px;top:54px;width:4px;height:268px;background:#c1c1c1"></div>
<svg class="a" style="left:684px;top:49px" width="4" height="3" viewBox="0 0 4 3"><path d="M0 3L2 0.5L4 3Z" fill="#505050"/></svg>
<svg class="a" style="left:684px;top:407px" width="4" height="3" viewBox="0 0 4 3"><path d="M0 0L2 2.5L4 0Z" fill="#505050"/></svg>
<div class="a" style="left:0;top:46px;width:1px;height:366px;background:#6b7579"></div>
<div class="a" style="left:1px;top:46.5px;width:1px;height:366px;background:rgba(255,255,255,.7)"></div>
<div class="a" style="left:1px;top:411px;width:682px;height:1px;background:rgba(255,255,255,.45)"></div>
<div class="a" style="left:689px;top:46px;width:1px;height:366px;background:#6b7579"></div>
<div class="a" style="left:0;top:46px;width:683px;height:1px;background:rgba(27,34,38,.55)"></div>
</body></html>
